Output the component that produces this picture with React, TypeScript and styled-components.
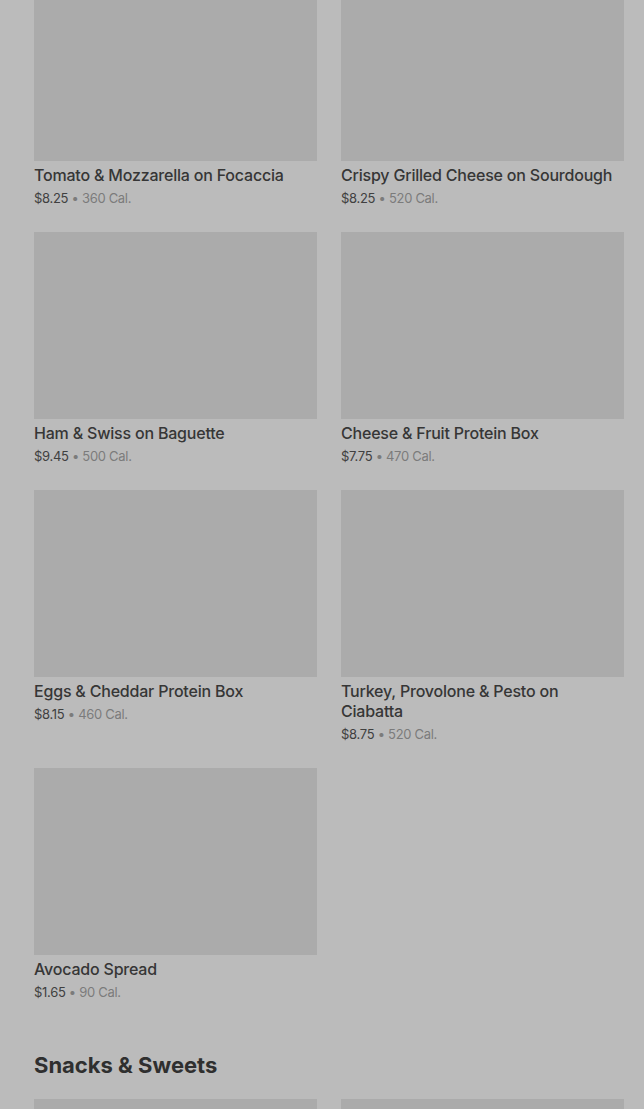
import React from 'react'
import styled, { createGlobalStyle } from 'styled-components'

const Global = createGlobalStyle`
  html, body {
    margin: 0;
    padding: 0;
    background: #bbbbbb;
    font-family: Inter, "Noto Sans", sans-serif;
    overflow: hidden;
  }
`

type Item = { name: string; price: string; cal: string }

const sandwiches: Item[] = [
  { name: 'Tomato & Mozzarella on Focaccia', price: '$8.25', cal: '360 Cal.' },
  { name: 'Crispy Grilled Cheese on Sourdough', price: '$8.25', cal: '520 Cal.' },
  { name: 'Ham & Swiss on Baguette', price: '$9.45', cal: '500 Cal.' },
  { name: 'Cheese & Fruit Protein Box', price: '$7.75', cal: '470 Cal.' },
  { name: 'Eggs & Cheddar Protein Box', price: '$8.15', cal: '460 Cal.' },
  { name: 'Turkey, Provolone & Pesto on Ciabatta', price: '$8.75', cal: '520 Cal.' },
  { name: 'Avocado Spread', price: '$1.65', cal: '90 Cal.' },
]

const Page = styled.main`
  padding: 0 20px 0 34px;
  margin-top: -26px;
  height: 1135px;
  overflow: hidden;
`

const Grid = styled.div`
  display: grid;
  grid-template-columns: 283px 283px;
  column-gap: 24px;
  row-gap: 24px;
  align-items: start;
`

const Card = styled.div`
  display: flex;
  flex-direction: column;
`

const Thumb = styled.div`
  height: 187px;
  background: #ababab;
`

const Name = styled.div`
  margin-top: 4px;
  font-size: 16px;
  line-height: 20px;
  font-weight: 500;
  letter-spacing: -0.2px;
  color: #363636;
`

const Meta = styled.div`
  margin-top: 3px;
  font-size: 13px;
  line-height: 20px;
  letter-spacing: -0.3px;
  color: #7b7b7b;
  span {
    color: #404040;
  }
`

const Section = styled.h2`
  margin: 49px 0 0;
  font-size: 22px;
  line-height: 28px;
  font-weight: 700;
  color: #2f2f2f;
`

const NextGrid = styled(Grid)`
  margin-top: 20px;
`

function MenuCard({ item }: { item: Item }) {
  return (
    <Card>
      <Thumb />
      <Name>{item.name}</Name>
      <Meta>
        <span>{item.price}</span> • {item.cal}
      </Meta>
    </Card>
  )
}

export default function App() {
  return (
    <Page>
      <Global />
      <Grid>
        {sandwiches.map((it) => (
          <MenuCard key={it.name} item={it} />
        ))}
      </Grid>
      <Section>Snacks &amp; Sweets</Section>
      <NextGrid>
        <Thumb />
        <Thumb />
      </NextGrid>
    </Page>
  )
}
